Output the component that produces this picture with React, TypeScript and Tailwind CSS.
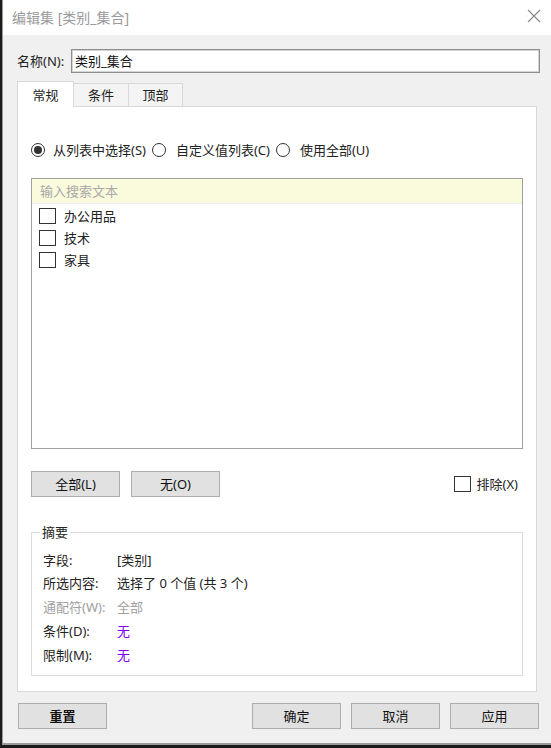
const font = { fontFamily: '"Noto Sans", "Noto Sans CJK SC", sans-serif' };

const Radio = ({ checked, label, first }: { checked?: boolean; label: string; first?: boolean }) => (
  <div className="flex items-center">
    <span className="flex h-[14px] w-[14px] items-center justify-center rounded-full border border-[#333] bg-white">
      {checked && <span className="h-[8px] w-[8px] rounded-full bg-[#333]" />}
    </span>
    <span className={(first ? "ml-[8px]" : "ml-[10px]") + " text-[13px] leading-[16px] text-[#222]"}>{label}</span>
  </div>
);

const Box = () => <span className="block h-[16px] w-[17px] shrink-0 border border-[#333] bg-white" />;

const Btn = ({ label, className = "" }: { label: string; className?: string }) => (
  <button
    className={
      "flex h-[26px] w-[89px] items-center justify-center border border-[#adadad] bg-[#e1e1e1] text-[13px] leading-[16px] text-[#111] " +
      className
    }
  >
    {label}
  </button>
);

const SummaryRow = ({ label, value, muted, purple, h = "h-[24px]" }: { label: string; value: string; muted?: boolean; purple?: boolean; h?: string }) => (
  <div className={"flex items-center text-[13px] leading-[16px] " + h}>
    <span className={"w-[74px] " + (muted ? "text-[#a0a0a0]" : "text-[#222]")}>{label}</span>
    <span className={purple ? "text-[#8000ff]" : muted ? "text-[#a0a0a0]" : "text-[#222]"}>{value}</span>
  </div>
);

export default function App() {
  const items = ["办公用品", "技术", "家具"];

  return (
    <div className="h-[748px] w-[551px] overflow-hidden bg-[#1c1c1c]" style={font}>
      <div className="ml-[2px] flex h-[745px] w-[549px] flex-col border-b-2 border-l border-[#9b9b9b] bg-[#f0f0f0]">
        {/* title bar */}
        <div className="flex h-[35px] shrink-0 items-center justify-between bg-white pl-[9px] pr-[10px]">
          <span className="text-[14px] leading-[18px] text-[#9a9a9a]">编辑集 [类别_集合]</span>
          <svg width="14" height="14" viewBox="0 0 14 14" className="mb-[3px]">
            <path d="M1 1L13 13M13 1L1 13" stroke="#888" strokeWidth="1.1" fill="none" />
          </svg>
        </div>

        <div className="flex flex-1 flex-col pl-[14px]">
          {/* name */}
          <div className="mt-[14px] flex items-center">
            <span className="w-[54px] text-[13px] leading-[16px] text-[#222]">名称(N):</span>
            <div className="flex h-[24px] w-[469px] items-center border border-[#8e8e8e] bg-white pl-[3px] text-[13px] leading-[16px] text-[#111] shadow-[inset_0_0_0_1px_#d4d4d4]">
              类别_集合
            </div>
          </div>

          {/* tabs */}
          <div className="mt-[8px] flex items-end">
            <div className="relative z-10 -mb-px flex h-[26px] w-[57px] items-center justify-center border border-b-0 border-[#d9d9d9] bg-white text-[13px] leading-[16px] text-[#222]">
              常规
            </div>
            <div className="flex h-[23px] w-[55px] items-center justify-center border border-b-0 border-l-0 border-[#d9d9d9] bg-[#f4f4f4] text-[13px] leading-[16px] text-[#222]">
              条件
            </div>
            <div className="flex h-[23px] w-[54px] items-center justify-center border border-b-0 border-l-0 border-[#d9d9d9] bg-[#f4f4f4] text-[13px] leading-[16px] text-[#222]">
              顶部
            </div>
          </div>

          {/* panel */}
          <div className="flex h-[586px] w-[520px] flex-col border border-[#d9d9d9] bg-white px-[13px]">
            <div className="mt-[35px] flex items-center gap-[6px]">
              <Radio checked first label="从列表中选择(S)" />
              <Radio label="自定义值列表(C)" />
              <Radio label="使用全部(U)" />
            </div>

            <div className="mt-[20px] flex h-[271px] w-[492px] flex-col border border-[#a0a0a0]">
              <div className="flex h-[25px] shrink-0 items-center border-b border-[#ececec] bg-[#fafadc] pl-[8px] text-[13px] leading-[16px] text-[#a8a8a8]">
                输入搜索文本
              </div>
              <div className="mt-[1px] flex flex-col pl-[7px]">
                {items.map((it) => (
                  <div key={it} className="flex h-[22px] items-center">
                    <Box />
                    <span className="ml-[8px] text-[13px] leading-[16px] text-[#222]">{it}</span>
                  </div>
                ))}
              </div>
            </div>

            <div className="mt-[22px] flex items-center">
              <Btn label="全部(L)" />
              <Btn label="无(O)" className="ml-[11px] w-[88px]" />
              <div className="ml-auto mr-[5px] flex items-center">
                <Box />
                <span className="ml-[6px] text-[13px] leading-[16px] text-[#222]">排除(X)</span>
              </div>
            </div>

            <fieldset className="mt-[27px] h-[152px] w-[492px] border border-[#dcdcdc] px-[11px]">
              <legend className="-ml-[3px] px-[2px] text-[13px] leading-[16px] text-[#222]">摘要</legend>
              <div className="mt-[9px] flex flex-col">
                <SummaryRow label="字段:" value="[类别]" h="h-[22px]" />
                <SummaryRow label="所选内容:" value="选择了 0 个值 (共 3 个)" />
                <SummaryRow label="通配符(W):" value="全部" muted />
                <SummaryRow label="条件(D):" value="无" purple />
                <SummaryRow label="限制(M):" value="无" purple />
              </div>
            </fieldset>
          </div>

          {/* bottom buttons */}
          <div className="mt-[11px] flex items-center">
            <Btn label="重置" className="ml-[1px] font-bold" />
            <Btn label="确定" className="ml-auto" />
            <Btn label="取消" className="ml-[10px] w-[88px]" />
            <Btn label="应用" className="ml-[10px] mr-[12px]" />
          </div>
        </div>
      </div>
    </div>
  );
}
